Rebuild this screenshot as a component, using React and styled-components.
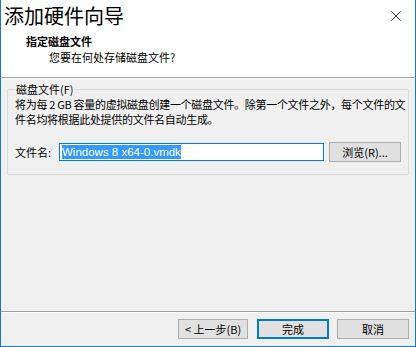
import React from "react";
import styled, { createGlobalStyle } from "styled-components";

const Global = createGlobalStyle`
  html, body { margin: 0; padding: 0; background: #ffffff; }
  body { font-family: "Noto Sans CJK SC", "Microsoft YaHei", sans-serif; font-size: 11px; color: #000; }
`;

const Window = styled.div`
  width: 416px;
  height: 347px;
  box-sizing: border-box;
  border-left: 1px solid #1b78d0;
  border-bottom: 1px solid #1b78d0;
  border-right: 1px solid #1b78d0;
  display: flex;
  flex-direction: column;
  background: #f0f0f0;
`;

const Header = styled.div`
  background: #ffffff;
  height: 77px;
  display: flex;
  flex-direction: column;
  border-bottom: 1px solid #a0a0a0;
  box-shadow: 0 1px 0 #ffffff;
`;

const TitleRow = styled.div`
  display: flex;
  align-items: center;
  justify-content: space-between;
  height: 32px;
  padding: 0 14px 0 3px;
`;

const Title = styled.div`
  font-size: 20px;
  line-height: 30px;
  color: #000;
`;

const Close = styled.svg`
  width: 10px;
  height: 10px;
`;

const StepTitle = styled.div`
  font-weight: bold;
  font-size: 11px;
  line-height: 16px;
  margin: 1px 0 0 25px;
`;

const StepSub = styled.div`
  font-size: 11px;
  line-height: 16px;
  margin: 0 0 0 48px;
`;

const Body = styled.div`
  flex: 1;
  padding: 3px 6px 0 6px;
  display: flex;
  flex-direction: column;
`;

const Group = styled.fieldset`
  margin: 0;
  padding: 0 4px 12px 7px;
  border: 1px solid #dcdcdc;
  border-radius: 0;
`;

const Legend = styled.legend`
  padding: 0 1px;
  margin-left: 0;
  font-size: 11px;
  line-height: 16px;
  color: #000;
`;

const Desc = styled.div`
  font-size: 11px;
  line-height: 15px;
  letter-spacing: -0.3px;
  margin-right: -2px;
`;

const FileRow = styled.div`
  display: flex;
  align-items: center;
  margin-top: 15px;
`;

const Label = styled.span`
  flex: 0 0 44px;
  font-size: 11px;
`;

const Input = styled.div`
  flex: 0 0 265px;
  height: 18px;
  box-sizing: border-box;
  border: 1px solid #0078d7;
  background: #fff;
  display: flex;
  align-items: center;
  padding-left: 2px;
`;

const Selected = styled.span`
  background: #3399ff;
  color: #fff;
  font-family: "Liberation Sans", Arial, sans-serif;
  font-size: 11.5px;
  line-height: 14px;
`;

const Button = styled.div`
  box-sizing: border-box;
  flex: 0 0 ${p => p.w || 72}px;
  height: 20px;
  display: flex;
  align-items: center;
  justify-content: center;
  background: #e1e1e1;
  border: ${p => (p.primary ? "2px solid #0078d7" : "1px solid #adadad")};
  font-size: 11px;
  margin-left: ${p => p.ml || 0}px;
`;

const Spacer = styled.div`
  flex: 1;
`;

const Footer = styled.div`
  border-top: 1px solid #a0a0a0;
  box-shadow: inset 0 1px 0 #ffffff;
  height: 34px;
  display: flex;
  align-items: center;
  justify-content: flex-end;
  padding: 0 6px 0 0;
`;

export default function App() {
  return (
    <>
      <Global />
      <Window>
        <Header>
          <TitleRow>
            <Title>添加硬件向导</Title>
            <Close viewBox="0 0 10 10">
              <path d="M0.5 0.5 L9.5 9.5 M9.5 0.5 L0.5 9.5" stroke="#333" strokeWidth="1" />
            </Close>
          </TitleRow>
          <StepTitle>指定磁盘文件</StepTitle>
          <StepSub>您要在何处存储磁盘文件?</StepSub>
        </Header>
        <Body>
          <Group>
            <Legend>磁盘文件(F)</Legend>
            <Desc>将为每 2 GB 容量的虚拟磁盘创建一个磁盘文件。除第一个文件之外，每个文件的文件名均将根据此处提供的文件名自动生成。</Desc>
            <FileRow>
              <Label>文件名:</Label>
              <Input><Selected>Windows 8 x64-0.vmdk</Selected></Input>
              <Button w={72} ml={5}>浏览(R)...</Button>
            </FileRow>
          </Group>
          <Spacer />
        </Body>
        <Footer>
          <Button w={70}>&lt; 上一步(B)</Button>
          <Button w={72} ml={9} primary>完成</Button>
          <Button w={72} ml={8}>取消</Button>
        </Footer>
      </Window>
    </>
  );
}
